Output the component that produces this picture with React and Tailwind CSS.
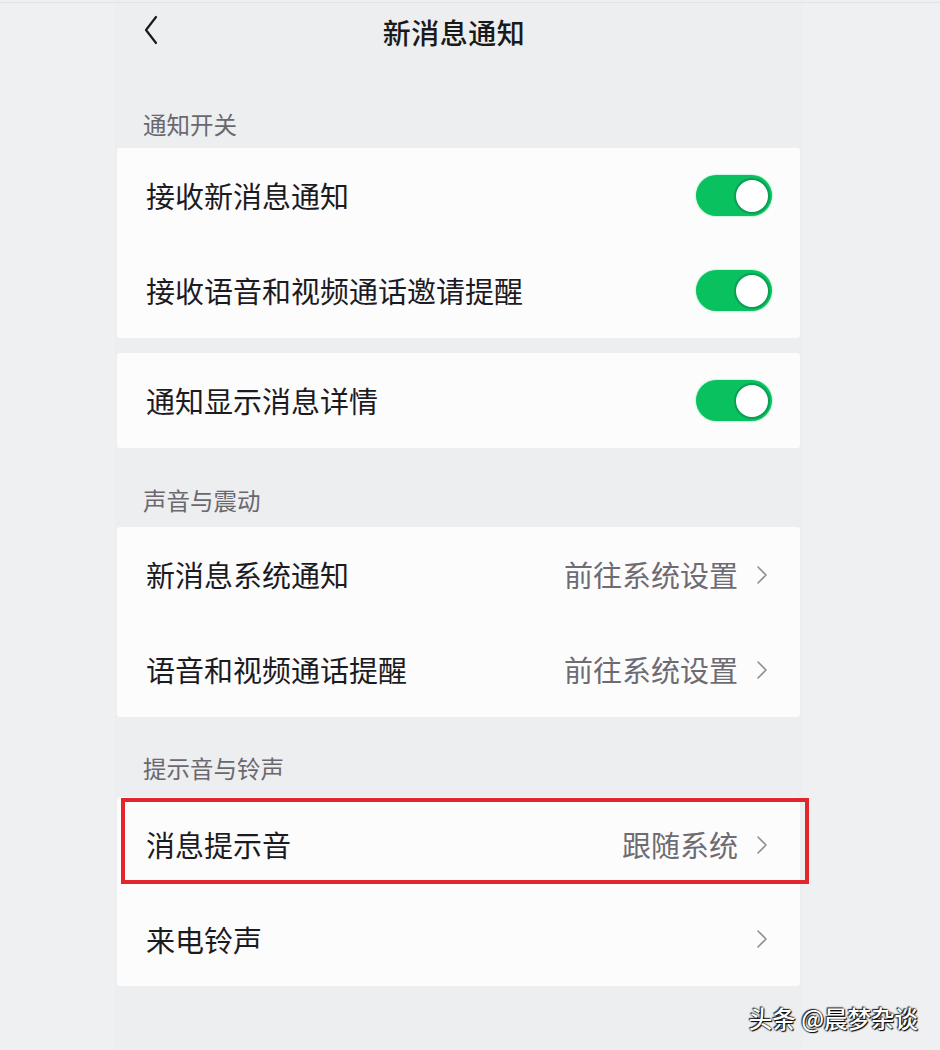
import React from "react";

const font = { fontFamily: '"Noto Sans CJK SC", "Noto Sans", sans-serif' };

function Toggle() {
  return (
    <div className="w-[76px] h-[41px] rounded-full bg-[#09c15f] flex items-center justify-end pr-[2px] shadow-[0_0_2px_rgba(40,220,120,0.7)]">
      <div className="w-[36px] h-[36px] rounded-full bg-white border-[2px] border-[#0b9e55]" />
    </div>
  );
}

function Chevron() {
  return (
    <svg width="12" height="20" viewBox="0 0 12 20" fill="none">
      <path d="M2 2l8 8-8 8" stroke="#8f8f94" strokeWidth="1.6" strokeLinecap="round" strokeLinejoin="round" />
    </svg>
  );
}

function Row({ label, value, toggle, link, h = "h-[95px]" }) {
  return (
    <div className={`${h} flex items-center justify-between pl-[29px] ${toggle ? "pr-[28px]" : "pr-[32px]"}`}>
      <span className="text-[29px] leading-none text-[#1c1b1f]">{label}</span>
      {toggle && <Toggle />}
      {link && (
        <div className="flex items-center gap-[18px]">
          {value && <span className="text-[29px] leading-none text-[#6e6b72]">{value}</span>}
          <Chevron />
        </div>
      )}
    </div>
  );
}

function Label({ children, className }) {
  return (
    <div className={`flex items-end pl-[28px] ${className}`}>
      <span className="text-[23.5px] leading-[24px] text-[#6a686e]">{children}</span>
    </div>
  );
}

export default function App() {
  return (
    <div className="relative w-[940px] h-[1050px] bg-[#eff0f2] overflow-hidden" style={font}>
      <div className="absolute left-0 top-[2px] w-full h-px bg-[#e2e3e6]" />
      <div className="w-[688px] ml-[115px] h-full bg-[#edeef0] flex flex-col">
        <div className="h-[64px] relative flex items-center justify-center">
          <svg className="absolute left-[28px] top-[15px]" width="16" height="30" viewBox="0 0 16 30" fill="none">
            <path d="M13 2L3 15l10 13" stroke="#1a1a1a" strokeWidth="2.2" strokeLinecap="round" strokeLinejoin="round" />
          </svg>
          <span className="text-[28px] font-medium text-[#1a1a1a] tracking-[0.5px] -ml-[10px]">新消息通知</span>
        </div>

        <Label className="h-[84px] pb-[12px]">通知开关</Label>
        <div className="mx-[2px] w-[683px] bg-[#fcfcfd] rounded-[3px]">
          <Row label="接收新消息通知" toggle />
          <Row label="接收语音和视频通话邀请提醒" toggle />
        </div>
        <div className="mx-[2px] mt-[15px] w-[683px] bg-[#fcfcfd] rounded-[3px]">
          <Row label="通知显示消息详情" toggle />
        </div>

        <Label className="h-[79px] pb-[15px]">声音与震动</Label>
        <div className="mx-[2px] w-[683px] bg-[#fcfcfd] rounded-[3px]">
          <Row label="新消息系统通知" value="前往系统设置" link />
          <Row label="语音和视频通话提醒" value="前往系统设置" link />
        </div>

        <Label className="h-[80px] pb-[17px]">提示音与铃声</Label>
        <div className="relative mx-[2px] w-[683px] bg-[#fcfcfd] rounded-[3px]">
          <Row label="消息提示音" value="跟随系统" link />
          <Row label="来电铃声" link h="h-[94px]" />
          <div className="absolute left-[4px] top-[1px] w-[688px] h-[86px] border-[4px] border-[#e3262c]" />
        </div>
      </div>
      <div className="absolute right-[22px] bottom-[20px] text-[23.5px] leading-none font-medium text-white [text-shadow:0_0_2px_#000,1px_1px_1px_#000,-1px_-1px_1px_#333]">
        头条 @晨梦杂谈
      </div>
    </div>
  );
}
